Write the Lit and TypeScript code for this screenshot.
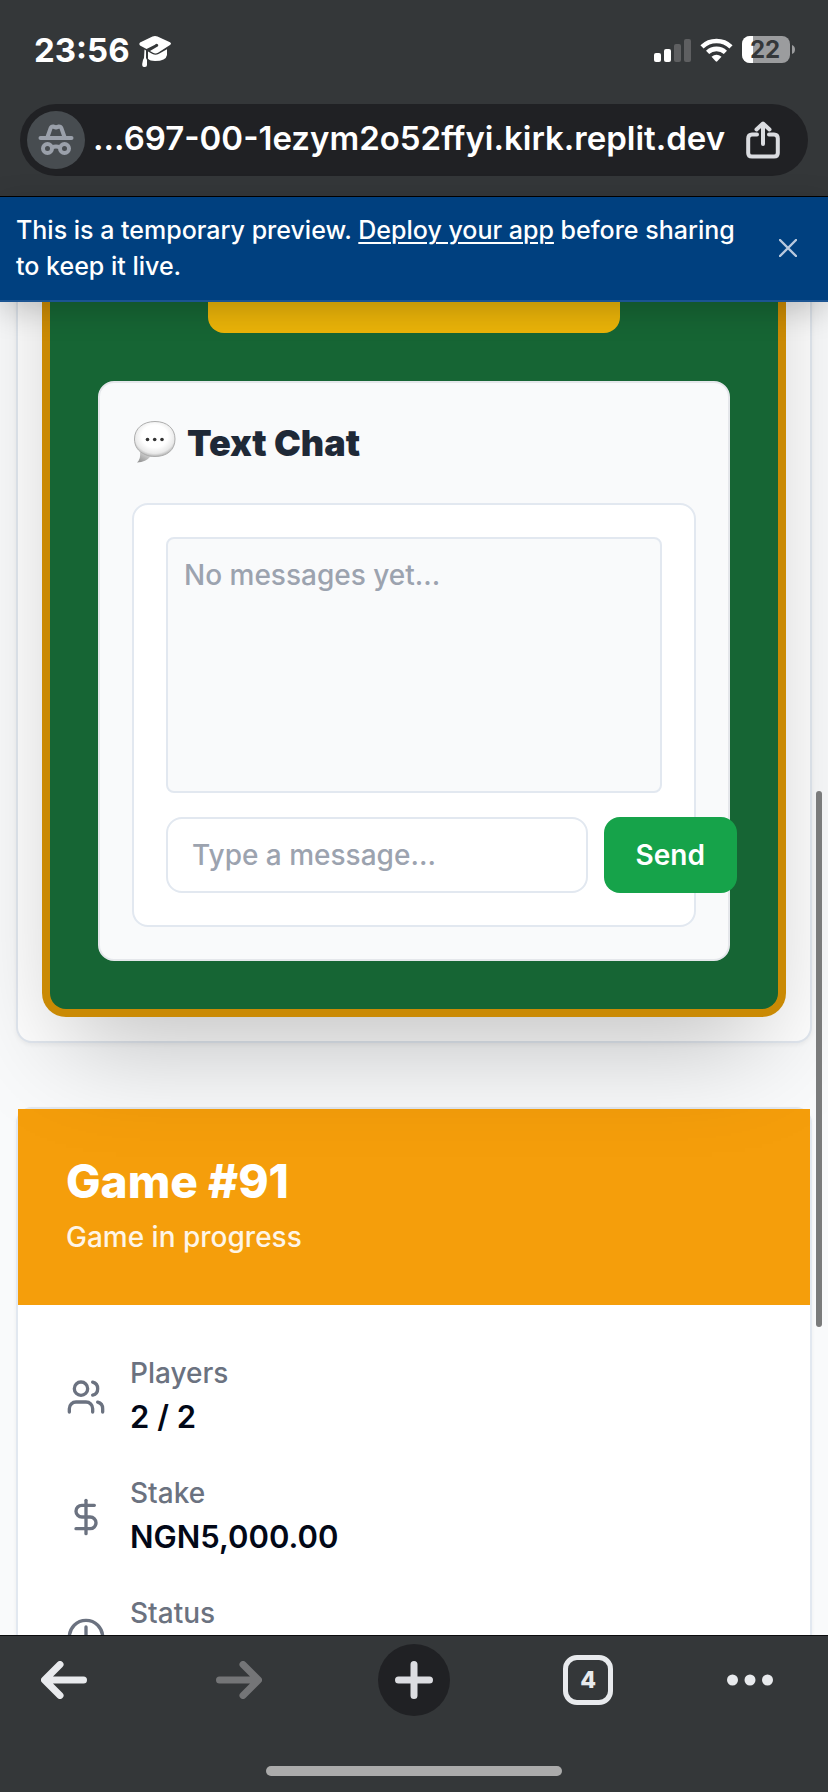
import { LitElement, html, css, svg } from "lit";
import { customElement, state } from "lit/decorators.js";

const usersIcon = svg`
  <path d="M16 21v-2a4 4 0 0 0-4-4H6a4 4 0 0 0-4 4v2" />
  <circle cx="9" cy="7" r="4" />
  <path d="M22 21v-2a4 4 0 0 0-3-3.87" />
  <path d="M16 3.13a4 4 0 0 1 0 7.75" />`;
const dollarIcon = svg`
  <path d="M12 2v20" />
  <path d="M17 5H9.500a3.500 3.500 0 0 0 0 7h5a3.500 3.500 0 0 1 0 7H6" />`;
const clockIcon = svg`
  <circle cx="12" cy="12" r="10" />
  <path d="M12 6v6l4 2" />`;

@customElement("browser-top")
class BrowserTop extends LitElement {
  static styles = css`
    :host {
      display: block;
      background: #343739;
      color: #fff;
      border-bottom: 1px solid #000;
      padding: 28px 20px 20px;
    }
    .status {
      display: flex;
      align-items: center;
      height: 44px;
      padding: 0 12px 0 14px;
      gap: 8px;
    }
    .time {
      font-size: 33px;
      line-height: 44px;
      font-weight: 700;
    }
    .cap {
      margin-top: 4px;
    }
    .right {
      display: flex;
      align-items: center;
      gap: 9px;
      margin-left: auto;
    }
    .bar {
      display: flex;
      align-items: center;
      height: 72px;
      margin-top: 32px;
      padding: 0 28px 0 7px;
      border-radius: 36px;
      background: #202124;
      gap: 8px;
    }
    .badge {
      flex: none;
      display: grid;
      place-items: center;
      width: 58px;
      height: 58px;
      border-radius: 50%;
      background: #474c50;
    }
    .url {
      flex: 1;
      min-width: 0;
      border: 0;
      padding: 0 0 4px;
      background: none;
      color: #fff;
      font: 600 33px/44px "Inter", sans-serif;
      text-align: left;
      outline: none;
    }
    .share {
      flex: none;
      border: 0;
      padding: 0;
      background: none;
      height: 40px;
    }
    .num {
      font: 700 24px "Inter", sans-serif;
    }
    svg {
      display: block;
    }
  `;

  render() {
    return html`
      <div class="status">
        <span class="time">23:56</span>
        <svg class="cap" width="34" height="34" viewBox="0 0 34 34" fill="#fff" aria-hidden="true">
          <path d="M14.500 1.600Q17 .4 19.500 1.600L32 7.200Q34 8.500 32 10L20 17.800Q17.500 19 15 17.800L12 16L20 11.300Q21 9 18 8.800L17 9.800L8.500 14L2 10.500Q.4 9 2 7.500Z" />
          <path d="M6.500 14.600L8 15.400V23L9 25V30Q9 32 7 32H6Q4 32 4.200 29L5 25L6 23Z" />
          <path d="M10 16.500L14.500 19Q17.500 20.500 20.500 19L29 14.200V20Q28 26 17 26Q12 26 10 23.800Z" />
        </svg>
        <div class="right">
          <svg width="37" height="23" viewBox="0 0 37 23" aria-label="Signal" role="img">
            <rect x="0" y="14" width="7" height="9" rx="2" fill="#fff" />
            <rect x="10" y="10" width="7" height="13" rx="2" fill="#fff" />
            <rect x="20" y="5" width="7" height="18" rx="2" fill="#5e5f61" />
            <rect x="30" y="0" width="7" height="23" rx="2" fill="#5e5f61" />
          </svg>
          <svg width="33" height="24" viewBox="0 0 33 24" aria-label="Wi-Fi" role="img">
            <path d="M2 8.800A21 21 0 0 1 31 8.800" fill="none" stroke="#fff" stroke-width="4.600" />
            <path d="M7.600 14.400A13 13 0 0 1 25.400 14.400" fill="none" stroke="#fff" stroke-width="4.600" />
            <path d="M11.500 18.700Q16.500 15 21.500 18.700L17.300 23.300Q16.500 24 15.700 23.300Z" fill="#fff" />
          </svg>
          <svg width="54" height="28" viewBox="0 0 54 28" aria-label="Battery" role="img">
            <rect width="48" height="27" rx="8" fill="#9b9c9e" />
            <path d="M11 0V27H8A8 8 0 0 1 0 19V8A8 8 0 0 1 8 0Z" fill="#fff" />
            <path d="M50 9Q53 10 53 13.500Q53 17 50 18Z" fill="#9b9c9e" />
            <text class="num" x="23" y="22" text-anchor="middle" fill="#343739">22</text>
          </svg>
        </div>
      </div>
      <div class="bar">
        <span class="badge">
          <svg width="36" height="32" viewBox="0 0 36 32" fill="none" stroke="#9aa0aa" stroke-width="4" stroke-linecap="round" stroke-linejoin="round" aria-hidden="true">
            <path d="M2.500 14H33.500" />
            <path d="M9.500 13L12.600 4.200Q13.200 2.500 15 2.500L18 3.500L21 2.500Q22.800 2.500 23.400 4.200L26.500 13" />
            <circle cx="9.500" cy="24.500" r="4.500" />
            <circle cx="26.500" cy="24.500" r="4.500" />
            <path d="M14 23.500Q18 21.500 22 23.500" />
          </svg>
        </span>
        <input class="url" readonly aria-label="Address" value="...697-00-1ezym2o52ffyi.kirk.replit.dev" />
        <button class="share" aria-label="Share">
          <svg width="34" height="38" viewBox="0 0 34 38" fill="none" stroke="#dadce0" stroke-width="4" stroke-linecap="round" stroke-linejoin="round">
            <path d="M11 13.500H6Q2.200 13.500 2.200 17.500V32Q2.200 35.600 6 35.600H28Q31.800 35.600 31.800 32V17.500Q31.800 13.500 28 13.500H23" />
            <path d="M17 23V3M10.500 8.500L17 2.500L23.500 8.500" />
          </svg>
        </button>
      </div>
    `;
  }
}

@customElement("preview-banner")
class PreviewBanner extends LitElement {
  static styles = css`
    :host {
      display: flex;
      align-items: center;
      justify-content: space-between;
      position: relative;
      z-index: 3;
      padding: 15px 28px 16px 16px;
      background: #00407f;
      border-bottom: 2px solid #1b5492;
      box-shadow: 0 8px 30px rgba(0, 0, 0, 0.2);
      color: #fff;
    }
    .text {
      margin: 0;
      max-width: 728px;
      font-size: 25px;
      line-height: 36px;
      font-weight: 500;
    }
    .line {
      display: block;
    }
    .link {
      color: inherit;
      text-decoration: underline;
      text-decoration-thickness: 2px;
      text-underline-offset: 3px;
    }
    .close {
      border: 0;
      padding: 3px;
      background: none;
    }
    svg {
      display: block;
    }
  `;

  render() {
    return html`
      <p class="text">
        This is a temporary preview. <a class="link" href="#deploy">Deploy your app</a> before sharing
        <span class="line">to keep it live.</span>
      </p>
      <button class="close" aria-label="Dismiss">
        <svg width="18" height="18" viewBox="0 0 18 18" stroke="#b9c9de" stroke-width="2.400" stroke-linecap="round">
          <path d="M1 1L17 17M17 1L1 17" />
        </svg>
      </button>
    `;
  }
}

@customElement("text-chat")
class TextChat extends LitElement {
  @state() messages: string[] = [];

  static styles = css`
    :host {
      display: block;
      padding: 32px;
      border: 2px solid #e5e7eb;
      border-radius: 16px;
      background: #f9fafb;
    }
    .title {
      display: flex;
      align-items: center;
      gap: 11px;
      margin: 0 0 32px;
      color: #1f2937;
      font-size: 36px;
      line-height: 56px;
      font-weight: 900;
    }
    .box {
      padding: 32px;
      border: 2px solid #e2e8f0;
      border-radius: 16px;
      background: #fff;
    }
    .log {
      box-sizing: border-box;
      height: 256px;
      padding: 16px;
      border: 2px solid #e2e8f0;
      border-radius: 8px;
      background: #f9fafb;
      color: #9ca3af;
      font-size: 28px;
      line-height: 40px;
      font-weight: 500;
    }
    .form {
      display: flex;
      gap: 16px;
      margin-top: 24px;
    }
    .field {
      box-sizing: border-box;
      flex: 0 0 85%;
      min-width: 0;
      padding: 16px 24px;
      border: 2px solid #e2e8f0;
      border-radius: 16px;
      background: #fff;
      color: #020817;
      font: 500 28px/40px "Inter", sans-serif;
    }
    .field::placeholder {
      color: #9ca3af;
      opacity: 1;
    }
    .send {
      flex: none;
      padding: 16px 32px;
      border: 0;
      border-radius: 16px;
      background: #16a34a;
      color: #fff;
      font: 600 28px/40px "Inter", sans-serif;
    }
  `;

  private submit(e: Event) {
    e.preventDefault();
    const field = this.renderRoot.querySelector<HTMLInputElement>(".field")!;
    if (!field.value.trim()) return;
    this.messages = [...this.messages, field.value];
    field.value = "";
  }

  render() {
    return html`
      <h3 class="title">
        <svg width="44" height="44" viewBox="0 0 44 44" aria-hidden="true">
          <defs>
            <radialGradient id="bubble" cx="50%" cy="42%" r="58%">
              <stop offset="0.550" stop-color="#ffffff" />
              <stop offset="0.850" stop-color="#e9e9e9" />
              <stop offset="1" stop-color="#b5b5b5" />
            </radialGradient>
            <linearGradient id="tail" x1="0" y1="1" x2="0.800" y2="0">
              <stop offset="0" stop-color="#8a8a8a" />
              <stop offset="1" stop-color="#dedede" />
            </linearGradient>
          </defs>
          <path d="M8 31Q9 38 5 41.500Q14 41 19 35Z" fill="url(#tail)" />
          <path d="M23 .5C35 .5 43 7.500 43 18C43 29 35 35.500 23 35.500C19 35.500 16 35 13 33.500C6 30.500 2.500 25 2.500 18C2.500 7.500 11 .5 23 .5Z" fill="url(#bubble)" stroke="#adadad" />
          <g fill="#333">
            <circle cx="15.500" cy="18.500" r="1.800" />
            <circle cx="22.700" cy="18.500" r="1.800" />
            <circle cx="30" cy="18.500" r="1.800" />
          </g>
        </svg>
        Text Chat
      </h3>
      <div class="box">
        <div class="log">
          ${this.messages.length ? this.messages.map((m) => html`<div>${m}</div>`) : "No messages yet..."}
        </div>
        <form class="form" @submit=${this.submit}>
          <input class="field" aria-label="Message" placeholder="Type a message..." />
          <button class="send">Send</button>
        </form>
      </div>
    `;
  }
}

@customElement("game-card")
class GameCard extends LitElement {
  rows = [
    { icon: usersIcon, label: "Players", value: "2 / 2" },
    { icon: dollarIcon, label: "Stake", value: "NGN5,000.00" },
    { icon: clockIcon, label: "Status", value: "" },
  ];

  static styles = css`
    :host {
      display: block;
      border: 2px solid #e2e8f0;
      border-radius: 16px;
      background: #fff;
      box-shadow: 0 2px 4px rgba(0, 0, 0, 0.05);
    }
    .head {
      padding: 48px;
      background: #f59e0b;
      color: #fff;
    }
    .name {
      margin: 0 0 12px;
      font-size: 46px;
      line-height: 48px;
      font-weight: 800;
    }
    .state {
      margin: 0;
      font-size: 28px;
      line-height: 40px;
      font-weight: 500;
      opacity: 0.9;
    }
    .facts {
      display: flex;
      flex-direction: column;
      gap: 32px;
      margin: 0;
      padding: 48px;
    }
    .fact {
      display: flex;
      align-items: center;
      gap: 24px;
    }
    .icon {
      flex: none;
      width: 40px;
      height: 40px;
      fill: none;
      stroke: #6b7280;
      stroke-width: 2;
      stroke-linecap: round;
      stroke-linejoin: round;
    }
    .label {
      color: #6b7280;
      font-size: 28px;
      line-height: 40px;
      font-weight: 500;
    }
    .value {
      min-height: 48px;
      margin: 0;
      color: #020817;
      font-size: 31px;
      line-height: 48px;
      font-weight: 600;
    }
  `;

  render() {
    return html`
      <header class="head">
        <h2 class="name">Game #91</h2>
        <p class="state">Game in progress</p>
      </header>
      <dl class="facts">
        ${this.rows.map(
          (r) => html`
            <div class="fact">
              <svg class="icon" viewBox="0 0 24 24" aria-hidden="true">${r.icon}</svg>
              <div>
                <dt class="label">${r.label}</dt>
                <dd class="value">${r.value}</dd>
              </div>
            </div>
          `
        )}
      </dl>
    `;
  }
}

@customElement("browser-toolbar")
class BrowserToolbar extends LitElement {
  static styles = css`
    :host {
      display: block;
      background: #343739;
      border-top: 1px solid #0b0c0d;
      padding: 8px 0 16px;
    }
    .row {
      display: flex;
      justify-content: space-between;
      padding: 0 55px 0 28px;
    }
    .btn {
      display: grid;
      place-items: center;
      width: 72px;
      height: 72px;
      padding: 0;
      border: 0;
      border-radius: 50%;
      background: none;
      color: #e8eaed;
    }
    .dim {
      color: #747577;
    }
    .plus {
      background: #202124;
      color: #dcdde1;
    }
    .more {
      width: 46px;
    }
    .tabs {
      box-sizing: border-box;
      width: 50px;
      height: 50px;
      border: 5px solid #e8eaed;
      border-radius: 14px;
      font: 800 23px/40px "Inter", sans-serif;
      text-align: center;
    }
    .arrow {
      fill: none;
      stroke: currentColor;
      stroke-width: 7;
      stroke-linecap: round;
      stroke-linejoin: round;
    }
    .home {
      width: 296px;
      height: 10px;
      margin: 50px auto 0;
      border-radius: 5px;
      background: #ababab;
    }
  `;

  render() {
    return html`
      <nav class="row" aria-label="Browser">
        <button class="btn" aria-label="Back">
          <svg class="arrow" width="46" height="38" viewBox="0 0 46 38"><path d="M42.500 19H4M19 3.500L3.500 19L19 34.500" /></svg>
        </button>
        <button class="btn dim" aria-label="Forward" disabled>
          <svg class="arrow" width="46" height="38" viewBox="0 0 46 38"><path d="M3.500 19H42M27 3.500L42.500 19L27 34.500" /></svg>
        </button>
        <button class="btn plus" aria-label="New tab">
          <svg class="arrow" width="38" height="38" viewBox="0 0 38 38"><path d="M3.500 19H34.500M19 3.500V34.500" /></svg>
        </button>
        <button class="btn" aria-label="Tabs"><span class="tabs">4</span></button>
        <button class="btn more" aria-label="More">
          <svg width="46" height="12" viewBox="0 0 46 12" fill="currentColor">
            <circle cx="5.500" cy="6" r="5.500" />
            <circle cx="23" cy="6" r="5.500" />
            <circle cx="40.500" cy="6" r="5.500" />
          </svg>
        </button>
      </nav>
      <div class="home"></div>
    `;
  }
}

@customElement("app-root")
class AppRoot extends LitElement {
  static styles = css`
    :host {
      display: flex;
      flex-direction: column;
      height: 100vh;
      overflow: hidden;
      font-family: "Inter", sans-serif;
    }
    .page {
      position: relative;
      flex: 1;
      min-height: 0;
      overflow: hidden;
      padding: 0 16px;
      background: #f9fafb;
    }
    .table {
      margin-top: -200px;
      padding: 0 24px 24px;
      border: 2px solid #e2e8f0;
      border-top: 0;
      border-radius: 0 0 16px 16px;
      background: #fff;
      box-shadow: 0 2px 4px rgba(0, 0, 0, 0.05);
    }
    .felt {
      position: relative;
      padding: 151px 48px 48px;
      border: 8px solid #ca8a04;
      border-top: 0;
      border-radius: 0 0 24px 24px;
      background: #166534;
      box-shadow: 0 50px 100px -24px rgba(0, 0, 0, 0.25);
    }
    .action {
      display: block;
      width: 412px;
      max-width: 100%;
      height: 80px;
      margin: 0 auto 48px;
      padding: 0;
      border: 0;
      border-radius: 16px;
      background: #eab308;
    }
    .game {
      margin-top: 64px;
    }
    .thumb {
      position: absolute;
      right: 6px;
      top: 489px;
      width: 6px;
      height: 536px;
      border-radius: 3px;
      background: #7a7b7b;
    }
  `;

  render() {
    return html`
      <browser-top></browser-top>
      <preview-banner></preview-banner>
      <main class="page">
        <section class="table">
          <div class="felt">
            <button class="action" aria-label="Play"></button>
            <text-chat></text-chat>
          </div>
        </section>
        <game-card class="game"></game-card>
        <div class="thumb"></div>
      </main>
      <browser-toolbar></browser-toolbar>
    `;
  }
}
